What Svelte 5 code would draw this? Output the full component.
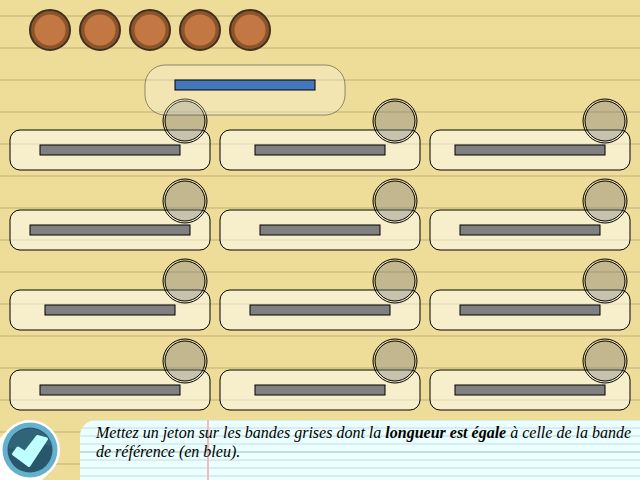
<script>
  const coins = 5;
  const reference = 140;
  let strips = $state(
    [140, 130, 150, 160, 120, 140, 130, 140, 140, 140, 130, 150].map((length) => ({
      length,
      marked: false
    }))
  );
</script>

<main>
  <section class="board">
    <div class="coins">
      {#each Array(coins) as _, i}
        <svg class="coin" viewBox="0 0 42 42" aria-label={`Jeton ${i + 1}`} role="img">
          <circle cx="21" cy="21" r="20" fill="#8b5529" stroke="#432e22" stroke-width="2" />
          <circle cx="21" cy="21" r="15.5" fill="#c37743" />
        </svg>
      {/each}
    </div>

    <div class="model">
      <svg class="frame" aria-hidden="true">
        <rect width="100%" height="100%" rx="20" fill="#fff" fill-opacity=".25" stroke="#000" stroke-opacity=".4" />
      </svg>
      <svg class="strip" style:width={`${reference}px`} aria-hidden="true">
        <rect width="100%" height="100%" fill="#4477bb" stroke="#000" />
      </svg>
    </div>

    <div class="grid">
      {#each strips as strip}
        <div class="card">
          <svg class="frame" aria-hidden="true">
            <rect width="100%" height="100%" rx="10" fill="#fff" fill-opacity=".5" stroke="#000" />
          </svg>
          <svg class="strip" style:width={`${strip.length}px`} aria-hidden="true">
            <rect width="100%" height="100%" fill="#808080" stroke="#000" />
          </svg>
          <button
            class="slot"
            aria-label="Poser un jeton"
            aria-pressed={strip.marked}
            onclick={() => (strip.marked = !strip.marked)}
          >
            <svg viewBox="0 0 44 44" aria-hidden="true">
              <circle cx="22" cy="22" r="22" fill="none" stroke="#000" />
              <circle cx="22" cy="22" r="20" fill={strip.marked ? '#c37743' : '#808080'} fill-opacity={strip.marked ? 1 : 0.4} stroke="#000" />
            </svg>
          </button>
        </div>
      {/each}
    </div>
  </section>

  <footer>
    <button class="check" aria-label="Valider">
      <svg viewBox="0 0 80 60" aria-hidden="true">
        <path d="M0 18L9 9L51 51L42 60H0Z" fill="#fff" />
        <circle cx="30" cy="30" r="30" fill="#fff" />
        <circle cx="30" cy="30" r="27.5" fill="#65b0cc" />
        <circle cx="30" cy="30" r="22.5" fill="#28566b" />
        <path d="M8 27A22.500 22.500 0 0 1 52 26Q40 22 30 28T8 27Z" fill="#306477" />
        <path d="M13.500 34L18 28L25 32.500L37.500 16.500L46.500 19L29 45.500Z" fill="#bfffff" stroke="#bfffff" stroke-width="3" stroke-linejoin="round" />
      </svg>
    </button>
    <p>
      Mettez un jeton sur les bandes grises dont la <b>longueur est égale</b> à celle de la bande de
      référence (en bleu).
    </p>
  </footer>
</main>

<style>
  :global(body) {
    margin: 0;
  }
  main {
    min-height: 100vh;
    display: flex;
    flex-direction: column;
    background: repeating-linear-gradient(#eedd99 0 15px, #d6c788 15px 17px, #eedd99 17px 32px);
    overflow: hidden;
  }
  .board {
    flex: 1;
    padding: 9px 10px 10px;
  }
  svg {
    display: block;
    overflow: visible;
  }
  .coins {
    display: flex;
    gap: 8px;
    padding-left: 19px;
  }
  .coin {
    width: 42px;
    height: 42px;
  }
  .model {
    position: relative;
    z-index: 1;
    pointer-events: none;
    display: flex;
    justify-content: center;
    width: 200px;
    height: 50px;
    box-sizing: border-box;
    padding-top: 15px;
    margin: 14px 0 15px 135px;
  }
  .frame {
    position: absolute;
    inset: 0;
    width: 100%;
    height: 100%;
  }
  .strip {
    position: relative;
    height: 10px;
  }
  .grid {
    display: grid;
    grid-template-columns: repeat(3, 1fr);
    gap: 40px 10px;
  }
  .card {
    position: relative;
    display: flex;
    justify-content: center;
    align-items: center;
    height: 40px;
  }
  .slot {
    position: absolute;
    top: -31px;
    right: 3px;
    width: 44px;
    height: 44px;
    padding: 0;
    border: 0;
    border-radius: 50%;
    background: none;
    cursor: pointer;
  }
  footer {
    display: flex;
    min-height: 60px;
  }
  .check {
    flex: none;
    width: 80px;
    padding: 0;
    border: 0;
    background: none;
    cursor: pointer;
  }
  .check svg {
    width: 80px;
    height: 60px;
  }
  p {
    flex: 1;
    margin: 0;
    padding: 3px 8px 0 16px;
    border-top-left-radius: 16px;
    background:
      linear-gradient(#f0bcbc, #f0bcbc) 127px 0 / 2px 100% no-repeat,
      linear-gradient(#c8dbde, #c8dbde) 0 31px / 100% 2px no-repeat,
      repeating-linear-gradient(#d8edf1 0 1px, #ebffff 1px 7px, #d8edf1 7px 8px);
    font: italic 16px/19px 'Liberation Serif', serif;
    color: #000;
  }
</style>
